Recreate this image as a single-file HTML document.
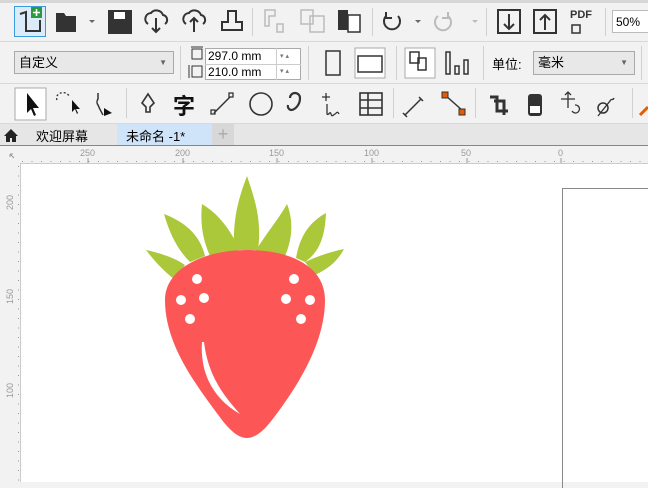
<!DOCTYPE html>
<html><head><meta charset="utf-8"><style>
*{margin:0;padding:0;box-sizing:border-box}
body{width:648px;height:482px;overflow:hidden;background:#f2f2f2;font-family:"Liberation Sans","Noto Sans CJK SC",sans-serif;position:relative;font-size:12px;color:#000}
.a{position:absolute}
.sep{position:absolute;width:1px;background:#d0d0d0}
.hl{position:absolute;height:1px;background:#d8d8d8;left:0;width:648px}
</style></head><body>
<div class="a" style="left:0;top:0;width:648px;height:3px;background:#d6d6d6"></div>
<div class="hl" style="top:41px"></div>
<div class="hl" style="top:83px"></div>
<div class="hl" style="top:123px"></div>
<div class="a" style="left:14px;top:6px;width:32px;height:31px;border:1px solid #3b9be0;background:#dcebf9"></div>
<svg class="a" style="left:0;top:0" width="648" height="125" fill="none" stroke="#333" stroke-width="2">
<path d="M20 14 L26 12 L26 31 L40 31 L40 20" stroke="#333"/>
<rect x="31" y="7" width="11" height="11" fill="#2e9a3e" stroke="none"/>
<path d="M36.5 9v7M33 12.5h7" stroke="#fff" stroke-width="1.6"/>
<path d="M56 13h8l2 3h10v16H56z" fill="#333" stroke="none"/>
<path d="M89 20l3 3 3-3z" fill="#666" stroke="none"/>
<rect x="108" y="10" width="24" height="24" fill="#333" stroke="none"/>
<rect x="114" y="12" width="11" height="7" fill="#fff" stroke="none"/>
<path d="M148 24a6 6 0 0 1 3-11a7 7 0 0 1 12 2a5 5 0 0 1 2 9M156 18v14M152 28l4 4 4-4"/>
<path d="M186 24a6 6 0 0 1 3-11a7 7 0 0 1 12 2a5 5 0 0 1 2 9M194 32V18M190 22l4-4 4 4"/>
<path d="M222 30V22h6V11h8v11h6v8z"/>
<g stroke="#bbb" stroke-width="1.5"><path d="M265 10h10v6h-6v10h-4z M277 24h6v8h-6z"/><path d="M301 10h12v14h-12z M310 16h14v16h-14z"/></g>
<rect x="338" y="10" width="10" height="20" fill="#333" stroke="none"/>
<rect x="348" y="15" width="12" height="17" fill="#fff" stroke="#333" stroke-width="1.5"/>
<path d="M386 16a8 8 0 1 0 12 0M386 12v6h6" stroke="#333"/>
<path d="M415 20l3 3 3-3z" fill="#666" stroke="none"/>
<path d="M448 16a8 8 0 1 1-10 0M448 12v6h-6" stroke="#bbb"/>
<path d="M472 20l3 3 3-3z" fill="#bbb" stroke="none"/>
<rect x="498" y="10" width="22" height="23"/><path d="M509 14v14M504 24l5 5 5-5"/>
<rect x="534" y="10" width="22" height="23"/><path d="M545 30V16M540 20l5-5 5 5"/>
<rect x="572" y="25" width="8" height="8" stroke-width="1.5"/>
<rect x="326" y="51" width="14" height="24" stroke-width="1.5"/>
<rect x="355" y="48" width="30" height="30" fill="#fff" stroke="#aaa" stroke-width="1"/>
<rect x="358" y="56" width="24" height="16" stroke-width="1.5"/>
<rect x="405" y="48" width="30" height="30" fill="#fff" stroke="#aaa" stroke-width="1"/>
<path d="M410 52h9v11h-9z M418 58h8v12h-8z" stroke-width="1.5"/>
<rect x="446" y="52" width="4" height="22" stroke-width="1.5"/><rect x="455" y="66" width="4" height="8" stroke-width="1.5"/><rect x="464" y="60" width="4" height="14" stroke-width="1.5"/>
<rect x="192" y="49" width="10" height="10" stroke-width="1"/><path d="M191 47h12" stroke-width="1"/>
<rect x="192" y="66" width="10" height="11" stroke-width="1"/><path d="M189 65v13" stroke-width="1"/>
<rect x="15" y="88" width="31" height="32" fill="#fff" stroke="#aaa" stroke-width="1"/>
<path d="M27 93v20l4-4 3 7 2-1-3-7h6z" fill="#111" stroke="none"/>
<path d="M57 100a6 5 0 0 1 12-4" stroke-dasharray="2 2" stroke-width="1.3"/><path d="M72 100v12l3-3 2 5 1-1-2-4h4z" fill="#111" stroke="none"/>
<path d="M98 93v6a5 5 0 0 0 0 6c2 5 4 8 5 10" stroke-width="1.5"/><path d="M104 108l8 5-8 3z" fill="#111" stroke="none"/>
<path d="M146 112v-5l-4-4 6-9 6 9-4 4v5z" stroke-width="1.6"/>
<text x="173" y="114" font-family="Noto Sans CJK SC" font-size="22" font-weight="bold" fill="#111" stroke="none">字</text>
<path d="M214 113l16-16" stroke-width="1.5"/><rect x="211" y="110" width="4" height="4" stroke-width="1.3"/><rect x="229" y="93" width="4" height="4" stroke-width="1.3"/>
<circle cx="261" cy="104" r="11" stroke-width="1.6"/>
<path d="M290 98a5 5 0 0 1 10 0c0 8-6 12-9 12a4 4 0 0 1-3-5" stroke-width="2.2"/>
<path d="M326 93v8M322 97h8M327 104v10c2 2 3-4 4 0s3 0 4 0s2-4 4 0" stroke-width="1.3"/>
<rect x="360" y="93" width="22" height="22" stroke-width="1.6"/><path d="M360 100h22M360 108h22M368 93v22" stroke-width="1.6"/>
<path d="M405 115l16-16M403 113l4 4M419 97l4 4" stroke-width="1.5"/>
<path d="M445 95l18 16" stroke-width="1.5"/><rect x="442" y="92" width="6" height="6" fill="#e65a00" stroke="#333" stroke-width="1"/><rect x="459" y="109" width="6" height="6" fill="#e65a00" stroke="#333" stroke-width="1"/>
<path d="M490 97h7v14h11M494 101h10v14" stroke-width="3"/>
<rect x="528" y="94" width="14" height="22" rx="3" fill="#333" stroke="none"/><rect x="530" y="106" width="10" height="7" fill="#fff" stroke="none"/>
<path d="M568 92v16M561 99h14M565 95l3-3 3 3" stroke-width="1.3"/><path d="M575 105a4 4 0 1 1-3 6" stroke-width="1.3"/>
<circle cx="603" cy="108" r="5" stroke-width="1.5"/><path d="M598 116l12-15c1-3 3 0 4-3" stroke-width="1.3"/>
<path d="M640 115l8-8" stroke="#e65a00" stroke-width="3"/>
</svg>
<div class="sep" style="left:252px;top:8px;height:28px"></div>
<div class="sep" style="left:372px;top:8px;height:28px"></div>
<div class="sep" style="left:486px;top:8px;height:28px"></div>
<div class="sep" style="left:605px;top:8px;height:28px"></div>
<div class="a" style="left:570px;top:10px;font-size:11px;font-weight:bold;color:#333;line-height:11px">PDF</div>
<div class="a" style="left:612px;top:10px;width:40px;height:23px;background:#fff;border:1px solid #bbb;font-size:12px;padding:4px 3px">50%</div>
<div class="a" style="left:14px;top:51px;width:160px;height:23px;background:#e8e8e8;border:1px solid #aaa;padding:1px 4px;font-size:13px;line-height:19px">自定义<span style="position:absolute;right:6px;top:1px;font-size:8px;color:#666">▼</span></div>
<div class="sep" style="left:180px;top:46px;height:34px"></div>
<div class="a" style="left:205px;top:48px;width:96px;height:32px;border:1px solid #aaa;background:#fff"></div>
<div class="a" style="left:205px;top:64px;width:96px;height:1px;background:#ccc"></div>
<div class="a" style="left:276px;top:48px;width:1px;height:32px;background:#ccc"></div>
<div class="a" style="left:208px;top:49px;font-size:12px">297.0 mm</div>
<div class="a" style="left:208px;top:65px;font-size:12px">210.0 mm</div>
<div class="a" style="left:280px;top:49px;font-size:7px;color:#777;line-height:15px">▾ ▴<br>▾ ▴</div>
<div class="sep" style="left:308px;top:46px;height:34px"></div>
<div class="sep" style="left:396px;top:46px;height:34px"></div>
<div class="sep" style="left:483px;top:46px;height:34px"></div>
<div class="sep" style="left:641px;top:46px;height:34px"></div>
<div class="a" style="left:492px;top:54px;font-size:13px">单位:</div>
<div class="a" style="left:533px;top:51px;width:102px;height:24px;background:#e8e8e8;border:1px solid #aaa;padding:1px 4px;font-size:13px;line-height:19px">毫米<span style="position:absolute;right:6px;top:1px;font-size:8px;color:#666">▼</span></div>
<div class="sep" style="left:126px;top:88px;height:30px"></div>
<div class="sep" style="left:393px;top:88px;height:30px"></div>
<div class="sep" style="left:475px;top:88px;height:30px"></div>
<div class="sep" style="left:632px;top:88px;height:30px"></div>
<div class="a" style="left:0;top:124px;width:648px;height:21px;background:#e6e6e6"></div>
<svg class="a" style="left:4px;top:128px" width="14" height="14"><path d="M7 1L0 8h2v6h4v-4h2v4h4V8h2z" fill="#222"/></svg>
<div class="a" style="left:36px;top:126px;font-size:13px">欢迎屏幕</div>
<div class="a" style="left:117px;top:124px;width:95px;height:21px;background:#cfe3f9;padding:2px 9px;font-size:13px">未命名 -1*</div>
<div class="a" style="left:212px;top:124px;width:22px;height:21px;background:#d8d8d8;color:#aaa;font-size:18px;text-align:center;line-height:20px">+</div>
<div class="a" style="left:0;top:145px;width:648px;height:1px;background:#3b9be0"></div>
<div class="a" style="left:0;top:146px;width:648px;height:17px;background:#f2f2f2"></div>
<div class="a" style="left:0;top:146px;width:20px;height:336px;background:#f2f2f2"></div>
<div class="a" style="left:20px;top:163px;width:628px;height:319px;background:#fff;border-left:1px solid #ccc;border-top:1px solid #ccc"></div>
<svg class="a" style="left:0;top:146px" width="648" height="336" font-family="Liberation Sans" font-size="9" fill="#999">
<text x="80" y="10">250</text><text x="175" y="10">200</text><text x="269" y="10">150</text><text x="364" y="10">100</text><text x="461" y="10">50</text><text x="558" y="10">0</text>
<g stroke="#999"><path d="M88 12v5M183 12v5M277 12v5M372 12v5M467 12v5M561 12v5"/></g>
<g stroke="#999" stroke-dasharray="1 8.5"><path d="M22 15.5H648"/><path d="M18.5 20V336"/></g>
<text transform="translate(13,64) rotate(-90)">200</text>
<text transform="translate(13,158) rotate(-90)">150</text>
<text transform="translate(13,252) rotate(-90)">100</text>
<path d="M10 8l4 4M10 8h3M10 8v3" stroke="#999"/>
</svg>
<div class="a" style="left:562px;top:188px;width:90px;height:300px;border-left:1px solid #888;border-top:1px solid #888"></div>
<svg class="a" style="left:0;top:0" width="648" height="482">
<g fill="#abc73a">
<path d="M247 176C238 200 233 218 234 250L258 250C262 220 255 200 247 176Z"/>
<path d="M202 204C200 225 203 240 210 256L240 250C230 230 220 215 202 204Z"/>
<path d="M287 204C278 220 265 235 255 252L285 256C292 240 294 222 287 204Z"/>
<path d="M164 214C170 235 178 250 190 262L205 256C200 235 185 222 164 214Z"/>
<path d="M326 213C310 222 300 235 296 258L305 262C322 250 325 232 326 213Z"/>
<path d="M146 250C155 262 165 272 175 280L185 265C175 258 160 253 146 250Z"/>
<path d="M344 249C330 252 318 256 305 262L315 275C330 268 338 260 344 249Z"/>
</g>
<path d="M165 300C165 268 205 250 247 250C290 250 325 266 325 300C325 345 295 390 272 420C262 433 254 438 247 438C240 438 232 433 222 420C196 385 165 345 165 300Z" fill="#fd5656"/>
<g fill="#fff"><circle cx="197" cy="279" r="5"/><circle cx="181" cy="300" r="5"/><circle cx="204" cy="298" r="5"/><circle cx="190" cy="319" r="5"/><circle cx="294" cy="279" r="5"/><circle cx="286" cy="299" r="5"/><circle cx="310" cy="300" r="5"/><circle cx="301" cy="319" r="5"/>
<path d="M202 342C200 372 212 398 240 414C224 396 208 376 204 342Z"/></g>
</svg>
</body></html>
